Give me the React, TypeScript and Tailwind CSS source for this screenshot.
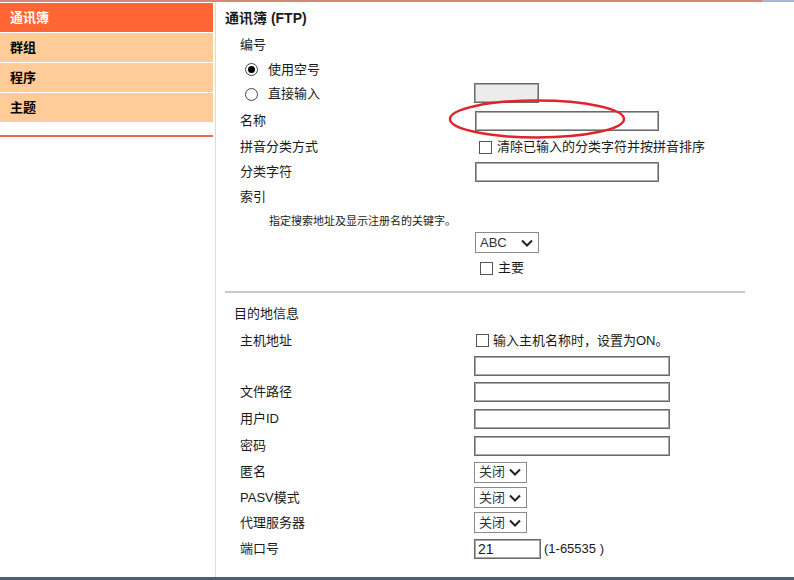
import type { ReactNode } from 'react'

const FONT = '"Liberation Sans", "Noto Sans CJK SC", Arial, sans-serif'

const MENU = ['通讯簿', '群组', '程序', '主题']

type RowProps = {
  h: string
  label?: ReactNode
  children?: ReactNode
}

function Row({ h, label, children }: RowProps) {
  return (
    <div className={`flex items-center pl-[24px] ${h}`}>
      <div className="w-[234px] shrink-0">{label}</div>
      <div className="flex items-center">{children}</div>
    </div>
  )
}

function TextBox({ w, value, disabled }: { w: string; value?: string; disabled?: boolean }) {
  return (
    <div
      className={`h-[20px] ${w} border border-[#6a6a6a] shadow-[inset_0_0_0_1px_#a8a8a8] px-[3px] flex items-center text-[14px] leading-none ${
        disabled ? 'bg-[#ececec]' : 'bg-white'
      }`}
    >
      {value}
    </div>
  )
}

function Chevron() {
  return (
    <svg width="12" height="8" viewBox="0 0 12 8" className="shrink-0">
      <path d="M1 1.5 L6 6.5 L11 1.5" fill="none" stroke="#222" strokeWidth="2" />
    </svg>
  )
}

function Select({ w, value }: { w: string; value: string }) {
  return (
    <div className={`h-[21px] ${w} border border-[#8a8a8a] bg-white flex items-center justify-between pl-[4px] pr-[5px] text-[13px] text-[#333]`}>
      <span>{value}</span>
      <Chevron />
    </div>
  )
}

function CheckBox() {
  return <span className="inline-block w-[13px] h-[13px] border border-[#555] bg-white shrink-0" />
}

function Radio({ checked }: { checked?: boolean }) {
  return (
    <span className="w-[13px] h-[13px] rounded-full border border-[#444] bg-white flex items-center justify-center shrink-0">
      {checked && <span className="w-[7px] h-[7px] rounded-full bg-black" />}
    </span>
  )
}

export default function App() {
  return (
    <div
      className="w-[794px] h-[580px] bg-white text-[13px] text-[#1a1a1a] flex flex-col overflow-hidden"
      style={{ fontFamily: FONT }}
    >
      {/* top strip */}
      <div className="h-[2px] flex shrink-0">
        <div className="flex-1 bg-[#d7877a]" />
        <div className="w-[32px] bg-[#a8b7cf]" />
      </div>

      <div className="flex flex-1">
        {/* left menu */}
        <div className="w-[213px] shrink-0 pt-[1px]">
          {MENU.map((item, i) => (
            <div
              key={item}
              className={`h-[30px] border-b border-white flex items-center pl-[10px] font-bold text-[13px] ${
                i === 0 ? 'bg-[#ff6633] text-white' : 'bg-[#ffcc99] text-black'
              }`}
            >
              {item}
            </div>
          ))}
          <div className="mt-[12px] h-[2px] bg-[#f26a45]" />
        </div>

        <div className="w-px bg-[#dcdcdc] ml-[2px]" />

        {/* content */}
        <div className="flex-1 relative">
          <div className="mt-[3px] h-[26px] pl-[9px] flex items-center font-bold text-[14px]">
            通讯簿 (FTP)
          </div>
          <Row h="h-[27px]" label="编号" />
          <div className="h-[23px] pl-[29px] flex items-center gap-[10px]">
            <Radio checked />
            <span>使用空号</span>
          </div>
          <div className="h-[26px] pl-[29px] flex items-center">
            <div className="w-[229px] flex items-center gap-[10px]">
              <Radio />
              <span>直接输入</span>
            </div>
            <div className="-mt-[2px]">
              <TextBox w="w-[65px]" disabled />
            </div>
          </div>
          <Row h="h-[27px]" label="名称">
            <div className="pl-[1px]">
              <TextBox w="w-[184px]" />
            </div>
          </Row>
          <Row h="h-[26px]" label="拼音分类方式">
            <div className="pl-[5px] flex items-center gap-[5px]">
              <CheckBox />
              <span>清除已输入的分类字符并按拼音排序</span>
            </div>
          </Row>
          <Row h="h-[24px]" label="分类字符">
            <div className="pl-[1px]">
              <TextBox w="w-[184px]" />
            </div>
          </Row>
          <Row h="h-[26px]" label="索引" />
          <div className="h-[22px] pl-[53px] flex items-center text-[11px]">
            指定搜索地址及显示注册名的关键字。
          </div>
          <Row h="h-[21px]">
            <div className="pl-[1px]">
              <Select w="w-[64px]" value="ABC" />
            </div>
          </Row>
          <Row h="h-[30px]">
            <div className="pl-[6px] flex items-center gap-[5px]">
              <CheckBox />
              <span>主要</span>
            </div>
          </Row>
          <div className="h-[18px] flex items-center pl-[9px]">
            <div className="w-[520px] h-[2px] bg-[#c8c8c8]" />
          </div>
          <div className="h-[26px] pl-[18px] flex items-center">目的地信息</div>
          <Row h="h-[27px]" label="主机地址">
            <div className="pl-[2px] flex items-center gap-[4px]">
              <CheckBox />
              <span>输入主机名称时，设置为ON。</span>
            </div>
          </Row>
          <Row h="h-[24px]">
            <TextBox w="w-[196px]" />
          </Row>
          <Row h="h-[27px]" label="文件路径">
            <TextBox w="w-[196px]" />
          </Row>
          <Row h="h-[27px]" label="用户ID">
            <TextBox w="w-[196px]" />
          </Row>
          <Row h="h-[27px]" label="密码">
            <TextBox w="w-[196px]" />
          </Row>
          <Row h="h-[26px]" label="匿名">
            <Select w="w-[53px]" value="关闭" />
          </Row>
          <Row h="h-[25px]" label="PASV模式">
            <Select w="w-[53px]" value="关闭" />
          </Row>
          <Row h="h-[25px]" label="代理服务器">
            <Select w="w-[53px]" value="关闭" />
          </Row>
          <Row h="h-[27px]" label="端口号">
            <TextBox w="w-[67px]" value="21" />
            <span className="ml-[3px]">(1-65535 )</span>
          </Row>

          {/* red annotation ellipse */}
          <svg
            width="180"
            height="44"
            viewBox="0 0 180 44"
            className="absolute left-[231px] top-[95px] pointer-events-none"
          >
            <ellipse cx="90" cy="22" rx="87" ry="18.5" fill="none" stroke="#e0242a" strokeWidth="2.5" />
          </svg>
        </div>
      </div>

      {/* bottom strip */}
      <div className="h-[3px] bg-[#4d5d74] shrink-0" />
    </div>
  )
}
